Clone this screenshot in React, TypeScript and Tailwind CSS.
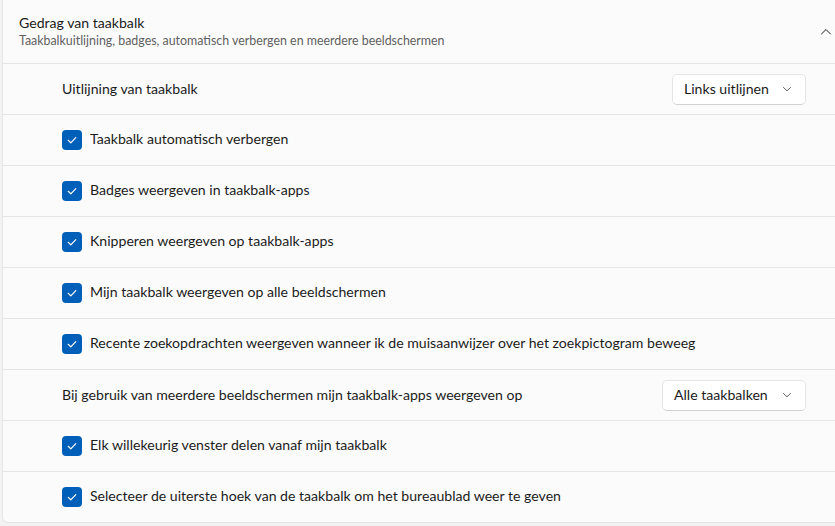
import {FC} from "react";

const Check: FC = () => (
    <span className="flex h-[20px] w-[20px] shrink-0 items-center justify-center rounded-[4px] bg-[#005fb8]">
        <svg width="12" height="12" viewBox="0 0 12 12" fill="none">
            <path d="M2.2 6.3 L4.8 8.8 L9.8 3.6" stroke="white" strokeWidth="1.2" strokeLinecap="round" strokeLinejoin="round" />
        </svg>
    </span>
);

const Dropdown: FC<{label: string; width: string}> = ({label, width}) => (
    <div className={`flex h-[31px] ${width} items-center justify-between rounded-[5px] border border-[#e5e5e5] border-b-[#d1d1d1] bg-white pl-[11px] pr-[13px] text-[14.1px] text-[#1b1b1b]`}>
        <span className="pb-[1px]">{label}</span>
        <svg width="10" height="10" viewBox="0 0 10 10" fill="none">
            <path d="M1.5 3.5 L5 6.8 L8.5 3.5" stroke="#5f5f5f" strokeWidth="1" strokeLinecap="round" strokeLinejoin="round" />
        </svg>
    </div>
);

const CheckRow: FC<{text: string}> = ({text}) => (
    <div className="flex h-[51px] items-center gap-[8px] border-t border-[#e5e5e5] pl-[59px]">
        <Check />
        <span className="pb-[3px] text-[14.1px] text-[#1b1b1b]">{text}</span>
    </div>
);

const SelectRow: FC<{text: string; value: string; width: string}> = ({text, value, width}) => (
    <div className="flex h-[51px] items-center justify-between border-t border-[#e5e5e5] pl-[59px] pr-[40px]">
        <span className="text-[14.1px] text-[#1b1b1b]">{text}</span>
        <Dropdown label={value} width={width} />
    </div>
);

export default function App() {
    return (
        <div className="h-[526px] w-[835px] overflow-hidden bg-[#f3f3f3] font-['Lato','Noto_Sans',sans-serif]">
            <div className="ml-[2px] w-[845px] rounded-b-[6px] border-x border-b border-[#e5e5e5] bg-[#fbfbfb]">
                {/* kop */}
                <div className="flex h-[63px] items-center justify-between pl-[16px] pr-[12px]">
                    <div className="flex flex-col pb-[2px]">
                        <span className="text-[14.1px] leading-[20px] text-[#1b1b1b]">Gedrag van taakbalk</span>
                        <span className="text-[12.4px] leading-[15px] text-[#5f5f5f]">Taakbalkuitlijning, badges, automatisch verbergen en meerdere beeldschermen</span>
                    </div>
                    <svg width="12" height="12" viewBox="0 0 12 12" fill="none" className="mr-[2px]">
                        <path d="M1.5 8 L6 3.5 L10.5 8" stroke="#1b1b1b" strokeWidth="1" strokeLinecap="round" strokeLinejoin="round" />
                    </svg>
                </div>

                <SelectRow text="Uitlijning van taakbalk" value="Links uitlijnen" width="w-[134px]" />
                <CheckRow text="Taakbalk automatisch verbergen" />
                <CheckRow text="Badges weergeven in taakbalk-apps" />
                <CheckRow text="Knipperen weergeven op taakbalk-apps" />
                <CheckRow text="Mijn taakbalk weergeven op alle beeldschermen" />
                <CheckRow text="Recente zoekopdrachten weergeven wanneer ik de muisaanwijzer over het zoekpictogram beweeg" />
                <SelectRow text="Bij gebruik van meerdere beeldschermen mijn taakbalk-apps weergeven op" value="Alle taakbalken" width="w-[144px]" />
                <CheckRow text="Elk willekeurig venster delen vanaf mijn taakbalk" />
                <CheckRow text="Selecteer de uiterste hoek van de taakbalk om het bureaublad weer te geven" />
            </div>
        </div>
    );
}
